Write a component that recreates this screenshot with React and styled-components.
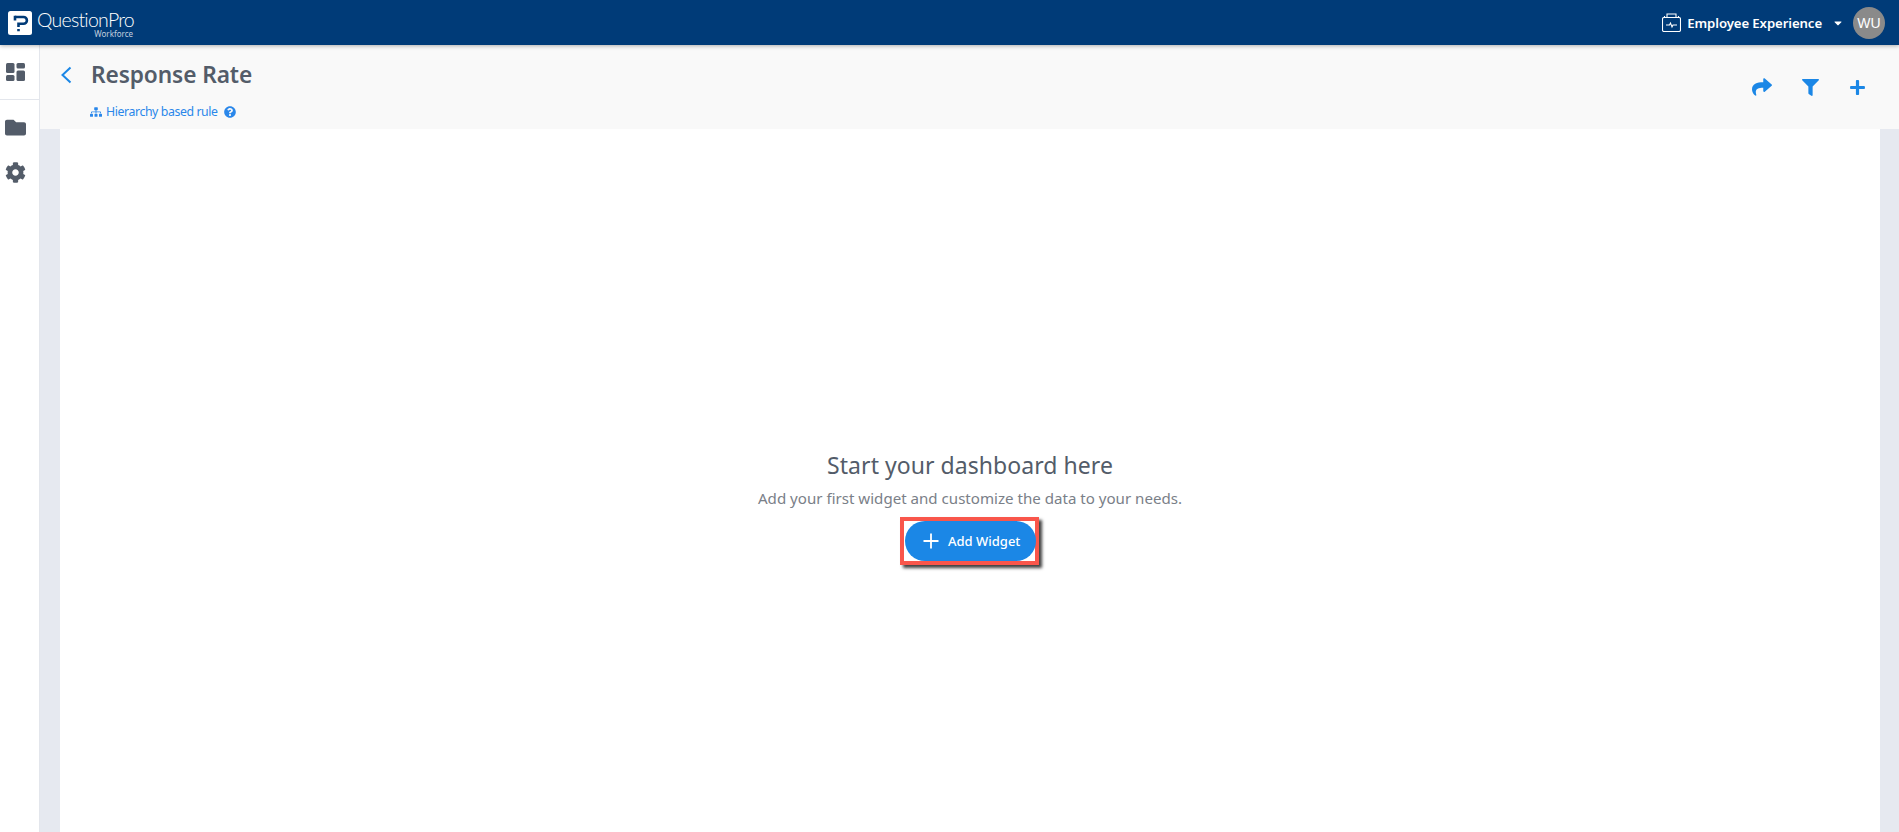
import React from "react";
import styled, { createGlobalStyle } from "styled-components";
import { FaFolder, FaCog, FaShare, FaFilter, FaPlus, FaSitemap, FaQuestionCircle, FaCaretDown } from "react-icons/fa";

const Global = createGlobalStyle`
  html, body { margin: 0; padding: 0; height: 100%; overflow: hidden; background: #fff; }
  body { font-family: "Noto Sans", "Open Sans", sans-serif; }
  #root { height: 100%; }
`;
const Page = styled.div`
  display: flex; flex-direction: column; height: 832px; width: 1899px; overflow: hidden;
`;
const TopBar = styled.header`
  height: 45px; flex: none; background: #003b78; display: flex; align-items: center;
  justify-content: space-between; padding: 0 14px 0 8px; box-shadow: 0 1px 4px rgba(0,0,0,.3); z-index: 2;
`;
const Brand = styled.div`
  display: flex; align-items: center; gap: 5px;
`;
const LogoMark = styled.svg`
  width: 24px; height: 24px; display: block;
`;
const Wordmark = styled.div`
  display: flex; flex-direction: column; color: #fff; width: 96px; margin-top: 1px;
`;
const WordName = styled.span`
  font-family: "Lato", sans-serif; font-weight: 300; font-size: 19.5px; line-height: 22px; letter-spacing: -0.75px; white-space: nowrap;
`;
const WordSub = styled.span`
  font-family: "Noto Sans", sans-serif; font-size: 8px; line-height: 6px; text-align: right; color: #c3d0df;
`;
const Account = styled.div`
  display: flex; align-items: center; color: #fff;
`;
const ProductName = styled.span`
  font-size: 13.2px; font-weight: 600; margin-left: 6px; white-space: nowrap; letter-spacing: -0.1px;
`;
const Caret = styled.span`
  display: flex; margin: 0 9px 0 10px; font-size: 12px;
`;
const Avatar = styled.div`
  width: 32px; height: 32px; border-radius: 50%; background: #8a8a8a; color: #fff;
  display: flex; align-items: center; justify-content: center; font-family: "Liberation Sans", sans-serif; font-size: 14px;
`;
const Body = styled.div`
  flex: 1; display: flex; min-height: 0;
`;
const Sidebar = styled.nav`
  width: 39px; flex: none; background: #fff; border-right: 1px solid #e3e6ec; display: flex; flex-direction: column;
`;
const SideItem = styled.div`
  height: ${p => p.$h}px; display: flex; align-items: center; justify-content: center; color: #535c69; font-size: 21px;
  padding-right: 8px; border-bottom: ${p => (p.$divider ? "1px solid #e3e6ec" : "none")}; box-sizing: border-box;
`;
const Main = styled.main`
  flex: 1; display: flex; flex-direction: column; min-width: 0;
`;
const SubHeader = styled.div`
  height: 84px; flex: none; background: #f9f9f9; display: flex; justify-content: space-between; box-sizing: border-box; padding: 0 20px;
`;
const TitleBlock = styled.div`
  display: flex; flex-direction: column;
`;
const TitleRow = styled.div`
  display: flex; align-items: center; height: 60px; color: #1b87e6;
`;
const BackIcon = styled.svg`
  width: 12px; height: 18px; margin-right: 19px;
`;
const Title = styled.h1`
  margin: 0; color: #535c69; font-size: 22.7px; font-weight: 600; line-height: 1; white-space: nowrap; letter-spacing: -0.1px;
`;
const RuleRow = styled.div`
  display: flex; align-items: center; gap: 4px; margin: -1px 0 0 30px; color: #2a87ea; line-height: 16px; font-size: 12.3px;
`;
const RuleLabel = styled.span`
  letter-spacing: -0.4px; white-space: nowrap;
`;
const HelpIcon = styled.span`
  display: flex; margin-left: 2px; font-size: 12px;
`;
const Actions = styled.div`
  display: flex; align-items: center; gap: 30px; height: 84px; padding: 0 13px 0 0; box-sizing: border-box; color: #1b87e6; font-size: 20px;
`;
const Canvas = styled.div`
  flex: 1; background: #e6e9f0; padding: 0 19px 0 20px; display: flex; min-height: 0;
`;
const Sheet = styled.section`
  flex: 1; background: #fff; display: flex; flex-direction: column; align-items: center; padding-top: 321px; box-sizing: border-box;
`;
const EmptyTitle = styled.h2`
  margin: 0; color: #535c69; font-size: 23px; font-weight: 400; line-height: 30px; letter-spacing: 0.05px; white-space: nowrap;
`;
const EmptyText = styled.p`
  margin: 7px 0 0; color: #7a8088; font-size: 15.1px; line-height: 22px; white-space: nowrap;
`;
const Highlight = styled.div`
  margin: 8px 0 0 -1px; width: 139px; height: 48px; box-sizing: border-box; border: 4px solid #f9564b;
  box-shadow: 3px 3px 3px rgba(0,0,0,.75); display: flex; align-items: center; justify-content: flex-end;
`;
const AddButton = styled.button`
  width: 131px; height: 40px; border: 0; padding: 0 0 0 18px; border-radius: 20px; background: #1b87e6; color: #fff; display: flex; align-items: center; gap: 9px;
  font-family: "Noto Sans", sans-serif; font-size: 13px; font-weight: 500; margin-right: -1px;
`;
const PlusIcon = styled.svg`
  width: 16px; height: 16px; display: block;
`;

export default function App() {
  return (
    <Page>
      <Global />
      <TopBar>
        <Brand>
          <LogoMark viewBox="0 0 24 24">
            <rect width="24" height="24" rx="2.5" fill="#fff" />
            <path d="M7 6h8.500a3.300 3.300 0 0 1 0 6.800H10.500V16" fill="none" stroke="#003b78" strokeWidth="2.600" />
            <path d="M7 4.700V9.500M10.500 18v2.200" stroke="#003b78" strokeWidth="2.600" fill="none" />
          </LogoMark>
          <Wordmark>
            <WordName>QuestionPro</WordName>
            <WordSub>Workforce</WordSub>
          </Wordmark>
        </Brand>
        <Account>
          <svg width="19" height="19" viewBox="0 0 19 19" fill="none" stroke="#fff" strokeWidth="1.100">
            <rect x="0.500" y="4.500" width="18" height="14" rx="1.500" />
            <path d="M5 4.500V1h9v3.500M2.500 4.500V3M16.500 4.500V3" />
            <path d="M4 12h3.500l1-2 1.500 4 1-2h4" />
          </svg>
          <ProductName>Employee Experience</ProductName>
          <Caret><FaCaretDown /></Caret>
          <Avatar>WU</Avatar>
        </Account>
      </TopBar>
      <Body>
        <Sidebar>
          <SideItem $h={55} $divider>
            <svg width="19" height="18" viewBox="0 0 19 18" fill="currentColor">
              <rect x="0" y="0" width="8.500" height="10" rx="1.500" />
              <rect x="10.500" y="0" width="8.500" height="5.500" rx="1.500" />
              <rect x="0" y="12" width="8.500" height="6" rx="1.500" />
              <rect x="10.500" y="7.500" width="8.500" height="10.500" rx="1.500" />
            </svg>
          </SideItem>
          <SideItem $h={55}><FaFolder /></SideItem>
          <SideItem $h={35}><FaCog /></SideItem>
        </Sidebar>
        <Main>
          <SubHeader>
            <TitleBlock>
              <TitleRow>
                <BackIcon viewBox="0 0 12 18" fill="none" stroke="currentColor" strokeWidth="2">
                  <path d="M10.500 1.500 2.500 9l8 7.500" />
                </BackIcon>
                <Title>Response Rate</Title>
              </TitleRow>
              <RuleRow>
                <FaSitemap size={12} />
                <RuleLabel>Hierarchy based rule</RuleLabel>
                <HelpIcon><FaQuestionCircle /></HelpIcon>
              </RuleRow>
            </TitleBlock>
            <Actions>
              <FaShare />
              <FaFilter size={17} />
              <FaPlus size={17} />
            </Actions>
          </SubHeader>
          <Canvas>
            <Sheet>
              <EmptyTitle>Start your dashboard here</EmptyTitle>
              <EmptyText>Add your first widget and customize the data to your needs.</EmptyText>
              <Highlight>
                <AddButton>
                  <PlusIcon viewBox="0 0 16 16" stroke="#fff" strokeWidth="1.800" fill="none"><path d="M8 0.500v15M0.500 8h15" /></PlusIcon>
                  Add Widget
                </AddButton>
              </Highlight>
            </Sheet>
          </Canvas>
        </Main>
      </Body>
    </Page>
  );
}
